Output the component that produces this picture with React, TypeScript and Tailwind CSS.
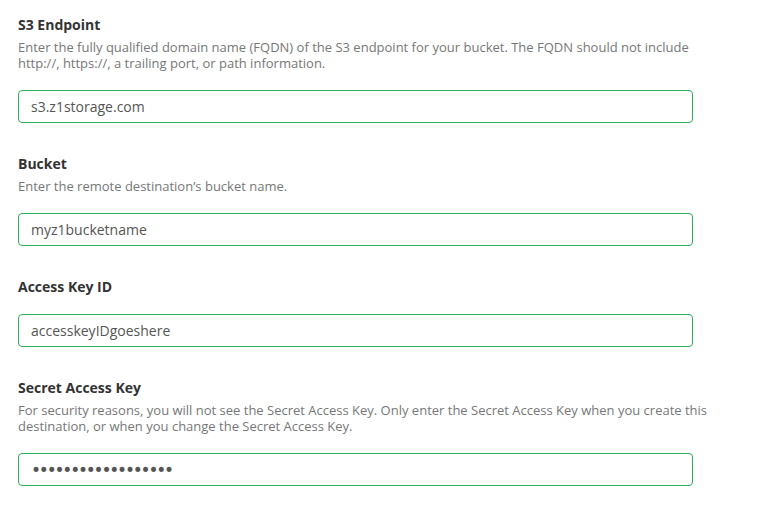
type Field = {
  label: string;
  description?: string;
  value: string;
  type?: string;
};

const fields: Field[] = [
  {
    label: 'S3 Endpoint',
    description:
      'Enter the fully qualified domain name (FQDN) of the S3 endpoint for your bucket. The FQDN should not include http://, https://, a trailing port, or path information.',
    value: 's3.z1storage.com',
  },
  {
    label: 'Bucket',
    description: 'Enter the remote destination\u2019s bucket name.',
    value: 'myz1bucketname',
  },
  {
    label: 'Access Key ID',
    value: 'accesskeyIDgoeshere',
  },
  {
    label: 'Secret Access Key',
    description:
      'For security reasons, you will not see the Secret Access Key. Only enter the Secret Access Key when you create this destination, or when you change the Secret Access Key.',
    value: 'secretaccesskey123',
    type: 'password',
  },
];

const FormField = ({ label, description, value, type = 'text' }: Field) => (
  <div className="flex flex-col">
    <label className="text-[14px] leading-[20px] font-bold text-[#333333]">{label}</label>
    {description && (
      <p className="mt-[4px] mb-[2px] text-[13px] leading-[16px] text-[#777777]">{description}</p>
    )}
    <input
      type={type}
      defaultValue={value}
      className={
        type === 'password'
          ? "mt-[17px] h-[33px] w-[675px] rounded-[4px] border border-[#2eb05b] px-[12px] font-['DejaVu_Sans'] text-[17px] tracking-[-2.2px] text-[#555555] outline-none"
          : 'mt-[17px] h-[33px] w-[675px] rounded-[4px] border border-[#2eb05b] px-[12px] text-[14px] text-[#555555] outline-none'
      }
    />
  </div>
);

export default function App() {
  return (
    <div
      className="min-h-screen bg-white pt-[15px] pl-[18px] pr-[50px]"
      style={{ fontFamily: '"Open Sans", sans-serif' }}
    >
      <div className="flex w-[690px] flex-col gap-[31px]">
        {fields.map((f) => (
          <FormField key={f.label} {...f} />
        ))}
      </div>
    </div>
  );
}
